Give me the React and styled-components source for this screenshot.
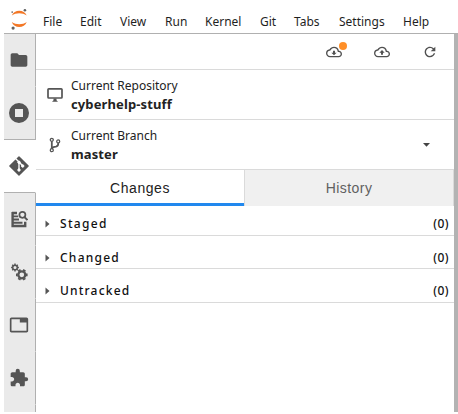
import React from "react";
import styled, { createGlobalStyle } from "styled-components";
import {
  MdFolder,
  MdOutlineCloudDownload,
  MdOutlineCloudUpload,
  MdRefresh,
  MdTab,
  MdExtension,
} from "react-icons/md";

const GlobalStyle = createGlobalStyle`
  * { box-sizing: border-box; }
  body {
    margin: 0;
    background: #fff;
    overflow: hidden;
    font-family: "Noto Sans", "Open Sans", sans-serif;
    color: #1f1f1f;
  }
`;

const Window = styled.div`
  width: 458px;
  height: 414px;
  padding: 0 0 2px 4px;
  display: flex;
  flex-direction: column;
  background: #fff;
`;

const MenuBar = styled.header`
  height: 34px;
  flex: none;
  display: flex;
  align-items: flex-start;
  border-bottom: 1px solid #b0b0b0;
`;

const Logo = styled.svg`
  width: 30px;
  height: 33px;
  flex: none;
`;

const MenuList = styled.nav`
  display: flex;
  padding: 13px 0 0 9px;
`;

const MenuItem = styled.span`
  width: ${(p) => p.$width}px;
  flex: none;
  font-size: 12px;
  line-height: 18px;
  white-space: nowrap;
`;

const Body = styled.div`
  flex: 1;
  min-height: 0;
  display: flex;
`;

const SideBar = styled.aside`
  width: 32px;
  flex: none;
  display: flex;
  flex-direction: column;
  background: #eaeaea;
`;

const SideTab = styled.div`
  height: 53px;
  flex: none;
  display: flex;
  align-items: center;
  justify-content: center;
  padding-right: 1px;
  color: #555;
  background: ${(p) => (p.$active ? "#fff" : "transparent")};
  border-right: 1px solid ${(p) => (p.$active ? "#fff" : "#b0b0b0")};
  border-bottom: 1px solid ${(p) => (p.$edge ? "#b0b0b0" : "transparent")};
  svg { display: block; flex: none; }
`;

const SideFill = styled.div`
  flex: 1;
  border-right: 1px solid #b0b0b0;
`;

const Panel = styled.main`
  flex: 1;
  display: flex;
  flex-direction: column;
  border-right: 4px solid #b3b3b3;
`;

const Toolbar = styled.div`
  height: 36px;
  flex: none;
  display: flex;
  align-items: center;
  justify-content: flex-end;
  gap: 32px;
  padding-right: 16px;
  color: #505050;
  border-bottom: 1px solid #dadada;
`;

const ToolButton = styled.div`
  position: relative;
  width: 16px;
  height: 16px;
  svg { display: block; }
`;

const Dot = styled.i`
  position: absolute;
  left: 13px;
  top: -2px;
  width: 8px;
  height: 8px;
  border-radius: 50%;
  background: #ff8f28;
`;

const InfoRow = styled.section`
  height: 50px;
  flex: none;
  display: flex;
  align-items: center;
  padding: 0 24px 0 11px;
  border-bottom: 1px solid #dadada;
  color: #555;
`;

const InfoIcon = styled.div`
  width: 24px;
  flex: none;
  svg { display: block; }
`;

const InfoText = styled.div`
  flex: 1;
  padding-top: 1px;
  color: #222;
  white-space: nowrap;
`;

const Caption = styled.div`
  font-size: 12px;
  line-height: 19px;
`;

const Name = styled.div`
  font-size: 13px;
  line-height: 19px;
  font-weight: 700;
  letter-spacing: 0.12px;
`;

const Tabs = styled.div`
  height: 36px;
  flex: none;
  display: flex;
`;

const Tab = styled.div`
  width: ${(p) => (p.$active ? 208 : 210)}px;
  flex: none;
  display: flex;
  align-items: center;
  justify-content: center;
  font-family: "Liberation Sans", Arial, sans-serif;
  font-size: 14px;
  letter-spacing: ${(p) => (p.$active ? 0.55 : 0.45)}px;
  color: ${(p) => (p.$active ? "#222" : "#606060")};
  background: ${(p) => (p.$active ? "#fff" : "#f0f0f0")};
  ${(p) =>
    p.$active
      ? "box-shadow: inset 0 -3px #2188ee;"
      : "border: 0 solid #dadada; border-left-width: 1px; border-right-width: 1px;"}
`;

const FileGroup = styled.div`
  height: ${(p) => p.$height}px;
  flex: none;
  display: flex;
  align-items: flex-end;
  padding: 0 5px ${(p) => p.$bottom}px 9px;
  border-bottom: 1px solid #dadada;
  color: #111;
  font-size: 12px;
  font-weight: 500;
  line-height: 18px;
`;

const Triangle = styled.svg`
  width: 5px;
  height: 8px;
  margin: 0 10px 5px 0;
  fill: #555;
`;

const GroupName = styled.span`
  flex: 1;
  letter-spacing: ${(p) => p.$track}px;
`;

const Count = styled.span`
  letter-spacing: 0.5px;
`;

const StopIcon = () => (
  <svg width="20" height="20" viewBox="0 0 20 20">
    <path fill="currentColor" fillRule="evenodd" d="M10 0a10 10 0 1 0 0 20a10 10 0 0 0 0-20M6 6h8v8H6z" />
  </svg>
);

const GitIcon = () => (
  <svg width="20" height="20" viewBox="0 0 20 20">
    <path d="M10 .9 19.1 10 10 19.1.9 10z" fill="currentColor" stroke="currentColor" strokeWidth="1.4" strokeLinejoin="round" />
    <g stroke="#fff" fill="#fff">
      <path d="M6.5 2.5 10 6v8M10 6l3.7 3.8" fill="none" strokeWidth="1.4" />
      <circle cx="10" cy="6.3" r="1.2" />
      <circle cx="10" cy="14" r="1.2" />
      <circle cx="13.7" cy="10" r="1.2" />
    </g>
  </svg>
);

const InspectIcon = () => (
  <svg width="18" height="18" viewBox="0 0 18 18" fill="none" stroke="currentColor">
    <path d="M2.6 2v14h12.6v-4.2M2 3h5" strokeWidth="2.4" />
    <path d="M3 6.4h5.2M3 9.5h6M3 12.7h9.5" strokeWidth="1.9" />
    <circle cx="12.4" cy="4.8" r="3" strokeWidth="1.7" />
    <path d="m14.4 7 3 3" strokeWidth="1.8" />
  </svg>
);

const gear = (cx, cy, r, n) =>
  Array.from({ length: n }, (_, i) => {
    const a = (i * 2 * Math.PI) / n;
    return `M${cx + Math.cos(a) * r} ${cy + Math.sin(a) * r}L${cx + Math.cos(a) * (r + 1.7)} ${cy + Math.sin(a) * (r + 1.7)}`;
  }).join("");

const GearsIcon = () => (
  <svg width="18" height="18" viewBox="0 0 18 18" fill="none" stroke="currentColor">
    <circle cx="5" cy="4.5" r="2.3" strokeWidth="1.5" />
    <path d={gear(5, 4.5, 2.2, 8)} strokeWidth="1.4" />
    <circle cx="11.8" cy="11.8" r="3.5" strokeWidth="2.3" />
    <path d={gear(11.8, 11.8, 4.1, 6)} strokeWidth="2.8" />
  </svg>
);

const MonitorIcon = () => (
  <svg width="16" height="16" viewBox="0 0 16 16">
    <rect x="1" y="1.8" width="14" height="9.2" rx=".8" fill="none" stroke="currentColor" strokeWidth="1.7" />
    <path d="M6.5 11.5h3v1.7l1.5 1.6H5l1.5-1.6z" fill="currentColor" />
  </svg>
);

const BranchIcon = () => (
  <svg width="16" height="16" viewBox="0 0 16 16" fill="none" stroke="currentColor">
    <circle cx="4.8" cy="2.8" r="1.5" strokeWidth="1.3" />
    <circle cx="4.8" cy="13.2" r="1.5" strokeWidth="1.3" />
    <circle cx="11.2" cy="4.4" r="1.5" strokeWidth="1.3" />
    <path d="M4.8 4.3v7.4M11.2 5.8v1.3q0 2-2.3 2.5Q5.3 10 4.8 12" strokeWidth="1.8" />
  </svg>
);

const menus = [
  ["File", 37], ["Edit", 40], ["View", 45], ["Run", 40], ["Kernel", 55],
  ["Git", 34], ["Tabs", 45], ["Settings", 64], ["Help", 30],
];

const groups = [
  ["Staged", 30, 1.3, 2],
  ["Changed", 33, 1.25, 1],
  ["Untracked", 34, 1.2, 2],
];

export default function App() {
  return (
    <>
      <GlobalStyle />
      <Window>
        <MenuBar>
          <Logo viewBox="0 0 30 33">
            <path fill="#f37726" d="M7.8 15.5C10 9 20.5 9 22.7 15.5C18.5 12.4 12 12.4 7.8 15.5M7.8 22C12 25 18.5 25 22.7 22C20.5 28.6 10 28.6 7.8 22" />
            <circle cx="20.9" cy="10.3" r="1.3" fill="#616262" />
            <circle cx="8.2" cy="12.1" r=".9" fill="#767677" />
            <circle cx="9.1" cy="28.1" r="1.6" fill="#616262" />
          </Logo>
          <MenuList>
            {menus.map(([name, width]) => (
              <MenuItem key={name} $width={width}>{name}</MenuItem>
            ))}
          </MenuList>
        </MenuBar>
        <Body>
          <SideBar>
            <SideTab><MdFolder size={20} /></SideTab>
            <SideTab $edge><StopIcon /></SideTab>
            <SideTab $active $edge><GitIcon /></SideTab>
            <SideTab><InspectIcon /></SideTab>
            <SideTab><GearsIcon /></SideTab>
            <SideTab><MdTab size={20} /></SideTab>
            <SideTab><MdExtension size={20} /></SideTab>
            <SideFill />
          </SideBar>
          <Panel>
            <Toolbar>
              <ToolButton><MdOutlineCloudDownload size={16} /><Dot /></ToolButton>
              <ToolButton><MdOutlineCloudUpload size={16} /></ToolButton>
              <ToolButton><MdRefresh size={16} /></ToolButton>
            </Toolbar>
            <InfoRow>
              <InfoIcon><MonitorIcon /></InfoIcon>
              <InfoText>
                <Caption>Current Repository</Caption>
                <Name>cyberhelp-stuff</Name>
              </InfoText>
            </InfoRow>
            <InfoRow>
              <InfoIcon><BranchIcon /></InfoIcon>
              <InfoText>
                <Caption>Current Branch</Caption>
                <Name>master</Name>
              </InfoText>
              <svg width="7" height="4" viewBox="0 0 7 4"><path fill="#444" d="M0 0h7L3.5 3.8z" /></svg>
            </InfoRow>
            <Tabs>
              <Tab $active>Changes</Tab>
              <Tab>History</Tab>
            </Tabs>
            {groups.map(([name, height, track, bottom]) => (
              <FileGroup key={name} $height={height} $bottom={bottom}>
                <Triangle viewBox="0 0 5 8"><path d="M0.5 0.5L4.5 4L0.5 7.5z" /></Triangle>
                <GroupName $track={track}>{name}</GroupName>
                <Count>(0)</Count>
              </FileGroup>
            ))}
          </Panel>
        </Body>
      </Window>
    </>
  );
}
